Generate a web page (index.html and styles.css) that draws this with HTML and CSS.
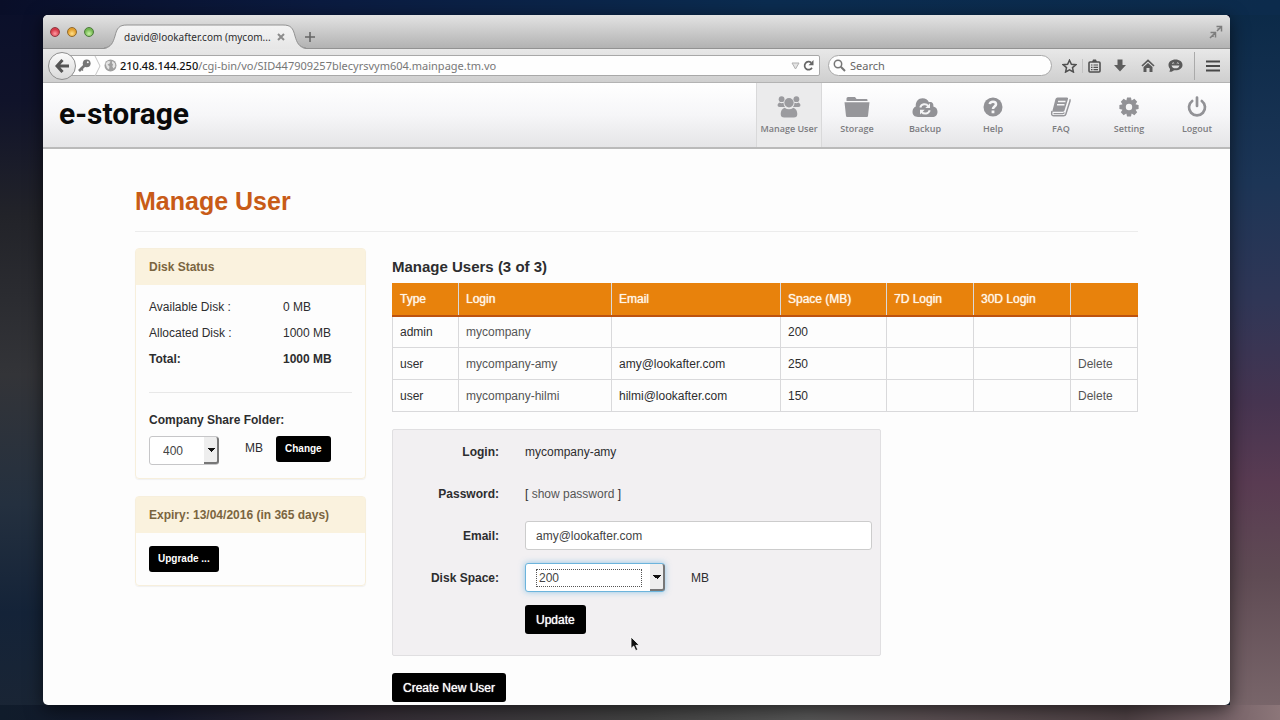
FILE: index.html
```html
<!DOCTYPE html>
<html lang="en">
<head>
<meta charset="utf-8">
<title>Manage User - e-storage</title>
<link rel="stylesheet" href="styles.css">
</head>
<body>
<div class="desktop">
<div class="window">
  <div class="titlebar">
    <div class="lights">
      <button class="light red" aria-label="Close"></button>
      <button class="light amber" aria-label="Minimise"></button>
      <button class="light green" aria-label="Zoom"></button>
    </div>
    <div class="tab">
      <svg class="tab-shape" viewBox="0 0 202 25" preserveAspectRatio="none" aria-hidden="true">
        <defs><linearGradient id="tabfill" x1="0" y1="0" x2="0" y2="1"><stop offset="0" stop-color="#f4f4f4"/><stop offset="1" stop-color="#e6e6e6"/></linearGradient></defs>
        <path d="M0 25 C7 24 9 19 11 12 C13 4 15 1 23 1 H179 C187 1 189 4 191 12 C193 19 195 24 202 25Z" fill="url(#tabfill)"/>
        <path d="M0 24 C7 23 9 19 11 12 C13 4 15 1 23 1 H179 C187 1 189 4 191 12 C193 19 195 23 202 24" fill="none" stroke="#929292"/>
      </svg>
      <span class="tab-title">david@lookafter.com (mycom...</span>
      <button class="tab-close" aria-label="Close tab"><svg width="8" height="8" viewBox="0 0 8 8"><path d="M1 1L7 7M7 1L1 7" stroke="#8c8c8c" stroke-width="2"/></svg></button>
    </div>
    <button class="icon-button new-tab" aria-label="New tab"><svg width="10" height="10" viewBox="0 0 10 10"><path d="M5 0V10M0 5H10" stroke="#666" stroke-width="1.6"/></svg></button>
    <button class="icon-button expand" aria-label="Full screen"><svg width="14" height="14" viewBox="0 0 14 14" fill="none" stroke="#7d7d7d" stroke-width="1.5"><path d="M7.5 1.5H12.500V6.500M12 2L8 6M1.500 7.500H6.500V12.500M6 8L1 13M8.500 4H10M4 10V12"/></svg></button>
  </div>

  <div class="toolbar">
    <button class="back" aria-label="Back"><svg width="15" height="14" viewBox="0 0 15 14"><path d="M7.500 1L2 7L7.500 13M2.500 7H14" fill="none" stroke="#555" stroke-width="3"/></svg></button>
    <div class="location">
      <svg class="key" width="13" height="13" viewBox="0 0 13 13"><circle cx="8.700" cy="4.300" r="3.900" fill="#777"/><circle cx="9.800" cy="3.200" r="1" fill="#f5f5f5"/><path d="M6.500 6.500L1 12" stroke="#777" stroke-width="2.600"/><path d="M2.500 9L5 11.500" stroke="#777" stroke-width="1.500"/></svg>
      <svg width="7" height="20" viewBox="0 0 7 20"><path d="M1 0L6 10L1 20" fill="none" stroke="#c4c4c4"/></svg>
      <svg width="13" height="13" viewBox="0 0 13 13"><circle cx="6.500" cy="6.500" r="6" fill="#a0a0a0"/><path d="M1.500 4.500L4 2L6.500 2.500L5.500 4.500L3.500 5.500L5.500 7.500L5 10.500L3 9ZM8.500 2L11 4.500L11.300 7.500L9.500 9.500L8.300 7.500L9 5.500L7.800 4Z" fill="#e4e4e4"/></svg>
      <div class="address" role="textbox" aria-label="Address"><b>210.48.144.250</b>/cgi-bin/vo/SID447909257blecyrsvym604.mainpage.tm.vo</div>
      <svg width="9" height="8" viewBox="0 0 9 8"><path d="M1 1H8L4.500 7Z" fill="#e4e4e4" stroke="#b0b0b0"/></svg>
      <button class="icon-button" aria-label="Reload"><svg width="11" height="11" viewBox="0 0 11 11"><path d="M9 7.800A4 4 0 1 1 8.200 2.600" fill="none" stroke="#666" stroke-width="1.700"/><path d="M10.500 0V5.200H5.500Z" fill="#666"/></svg></button>
    </div>
    <label class="search">
      <svg width="13" height="13" viewBox="0 0 13 13"><circle cx="5" cy="5" r="3.700" fill="none" stroke="#777" stroke-width="1.500"/><path d="M7.800 7.800L12 12" stroke="#777" stroke-width="2"/></svg>
      <input type="text" placeholder="Search" aria-label="Search">
    </label>
    <div class="tools">
      <button class="icon-button" aria-label="Bookmark"><svg width="15" height="14" viewBox="0 0 15 14"><path d="M7.500 1.200L9.400 5.200L13.800 5.700L10.500 8.600L11.400 13L7.500 10.800L3.600 13L4.500 8.600L1.200 5.700L5.600 5.200Z" fill="none" stroke="#505050" stroke-width="1.500"/></svg></button>
      <button class="icon-button divided" aria-label="Bookmarks list"><svg width="13" height="14" viewBox="0 0 13 14"><rect x="1" y="3" width="11" height="10" rx="1" fill="none" stroke="#505050" stroke-width="1.600"/><path d="M4 3L5 0.500H8L9 3Z" fill="#505050"/><path d="M3 6H4.500M5.500 6H10M3 8.300H4.500M5.500 8.300H10M3 10.600H4.500M5.500 10.600H10" stroke="#505050" stroke-width="1.200"/></svg></button>
      <button class="icon-button" aria-label="Downloads"><svg width="12" height="13" viewBox="0 0 12 13"><path d="M3.500 0.500H8.500V6H12L6 12.500L0 6H3.500Z" fill="#5e5e5e"/></svg></button>
      <button class="icon-button" aria-label="Home"><svg width="14" height="13" viewBox="0 0 14 13"><path d="M1 7L7 1.300L13 7" fill="none" stroke="#5a5a5a" stroke-width="1.700"/><path d="M2.500 8L7 4L11.500 8V13H8.500V9H5.500V13H2.500Z" fill="#5a5a5a"/></svg></button>
      <button class="icon-button" aria-label="Chat"><svg width="15" height="13" viewBox="0 0 15 13"><path d="M7.500 0.500C11.500 0.500 14.500 2.800 14.500 6C14.500 9.200 11.500 11.300 7.500 11.300C6.500 11.300 5.500 11.200 4.500 12.200C3.500 12.800 2.200 12.800 1 12.600C2 11.800 2.200 10.800 2 9.800C1 8.800 0.500 7.500 0.500 6C0.500 2.800 3.500 0.500 7.500 0.500Z" fill="#5a5a5a"/><path d="M3.500 6.500H11.500C11 8.500 9.500 9.300 7.500 9.300S4 8.500 3.500 6.500Z" fill="#ddd"/><path d="M4.200 4.500Q5.200 3 6.200 4.500M8.800 4.500Q9.800 3 10.800 4.500" fill="none" stroke="#ddd"/></svg></button>
    </div>
    <button class="icon-button menu" aria-label="Menu"><svg width="14" height="12" viewBox="0 0 14 12"><path d="M0 1.500H14M0 6H14M0 10.500H14" stroke="#484848" stroke-width="2"/></svg></button>
  </div>

  <header class="site-header">
    <a class="logo" href="#">e-storage</a>
    <nav class="main-nav" aria-label="Main">
      <a class="nav-item active" href="#">
        <svg width="24" height="24" viewBox="0 0 24 24" fill="#9b9b9f"><circle cx="4.600" cy="4.200" r="2.900"/><circle cx="19.400" cy="4.200" r="2.900"/><path d="M2.500 7.500Q4 8.800 6.500 7.800Q6.500 10.500 8 12H2.500Q0.500 12 0.500 10Q0.500 8.500 2.500 7.500ZM21.500 7.500Q20 8.800 17.500 7.800Q17.500 10.500 16 12H21.500Q23.500 12 23.500 10Q23.500 8.500 21.500 7.500Z"/><circle cx="12" cy="7.800" r="4.700"/><path d="M7.600 12.700Q12 16 16.400 12.700C19 13.500 20.300 16 20.300 19Q20.300 22.600 16.800 22.600H7.200Q3.700 22.600 3.700 19C3.700 16 5 13.500 7.600 12.700Z"/></svg>
        <span>Manage User</span></a>
      <a class="nav-item" href="#">
        <svg width="26" height="24" viewBox="0 0 26 24" fill="#96969a"><path d="M2.500 6V3.500Q2.500 2 4 2H11L12.500 4H22.500Q23.500 4 23.500 5V6Z"/><path d="M0.500 7.200H25.500L24 21Q23.900 22 22.800 22H3.200Q2.100 22 2 21Z"/></svg>
        <span>Storage</span></a>
      <a class="nav-item" href="#">
        <svg width="26" height="24" viewBox="0 0 26 24"><path d="M6 22C2.500 22 0.500 20 0.500 16.800C0.500 14.500 1.800 12.500 3.800 11.600C3.300 6.500 6.500 3.200 10.500 3.200C13.500 3.200 15.800 4.800 16.900 7.200C19.700 6.300 22 8.500 21.300 11.400C24 12 25.500 14 25.500 16.700C25.500 20 23.300 22 20.500 22Z" fill="#929296"/><path d="M8.300 12.500C9.200 8.800 14 8 16.200 11M17.700 15.300C16.800 18.800 12 19.800 9.600 16.800" fill="none" stroke="#f3f3f4" stroke-width="2"/><path d="M18 8.300V13H13.300ZM8 19.500V14.800H12.700Z" fill="#f3f3f4"/></svg>
        <span>Backup</span></a>
      <a class="nav-item" href="#">
        <svg width="20" height="24" viewBox="0 0 20 24"><circle cx="10" cy="12" r="9.500" fill="#929296"/><path d="M6.800 9.200C7.200 5.800 13 5.900 13 9.200C13 11.500 10 11.500 10 14" fill="none" stroke="#f6f6f7" stroke-width="2.600"/><path d="M8.600 15.600H11.400V18.200H8.600Z" fill="#f6f6f7"/></svg>
        <span>Help</span></a>
      <a class="nav-item" href="#">
        <svg width="22" height="24" viewBox="0 0 22 24"><path d="M7.500 2.500H17Q18.500 2.500 18 4L14.500 15.500Q14.100 16.800 12.800 16.800H2.200L5.500 4Q6 2.500 7.500 2.500Z" fill="#96969a"/><path d="M2 16Q0.800 20.800 3.500 20.800H13.500Q15.300 20.800 15.800 19.300L20 6Q20.300 5 19.600 4.400" fill="none" stroke="#96969a" stroke-width="1.500"/><path d="M3.500 18.600H12.800Q14 18.600 14.400 17.500" fill="none" stroke="#96969a" stroke-width="1.200"/><path d="M8 6.500H15.500M7 9.700H14.500" stroke="#f6f6f7" stroke-width="1.500"/></svg>
        <span>FAQ</span></a>
      <a class="nav-item" href="#">
        <svg width="20" height="24" viewBox="-10 -12 20 24"><g fill="#929296"><circle r="7"/><path id="teeth" d="M-2 -9.600H2L2.700 -6H-2.700ZM-2 9.600H2L2.700 6H-2.700ZM-9.600 -2V2L-6 2.700V-2.700ZM9.600 -2V2L6 2.700V-2.700Z"/><use href="#teeth" transform="rotate(45)"/></g><circle r="3.200" fill="#f6f6f7"/></svg>
        <span>Setting</span></a>
      <a class="nav-item" href="#">
        <svg width="20" height="24" viewBox="0 0 20 24" fill="none" stroke="#929296" stroke-width="2.700" stroke-linecap="round"><path d="M5.200 6A8 8 0 1 0 14.800 6M10 2.500V11"/></svg>
        <span>Logout</span></a>
    </nav>
  </header>

  <main class="page">
    <h1 class="page-title">Manage User</h1>
    <div class="columns">
      <aside class="sidebar">
        <section class="panel">
          <h2 class="panel-heading">Disk Status</h2>
          <div class="panel-body">
            <dl class="stats">
              <dt>Available Disk :</dt><dd>0 MB</dd>
              <dt>Allocated Disk :</dt><dd>1000 MB</dd>
              <dt class="total">Total:</dt><dd class="total">1000 MB</dd>
            </dl>
            <form class="share">
              <label class="share-label" for="share">Company Share Folder:</label>
              <div class="share-row">
                <span class="select small"><select id="share"><option>400</option></select></span>
                <span class="unit">MB</span>
                <button class="btn btn-small" type="button">Change</button>
              </div>
            </form>
          </div>
        </section>
        <section class="panel">
          <h2 class="panel-heading">Expiry: 13/04/2016 (in 365 days)</h2>
          <div class="panel-body upgrade"><button class="btn btn-small" type="button">Upgrade ...</button></div>
        </section>
      </aside>

      <section class="content">
        <h2 class="list-title">Manage Users (3 of 3)</h2>
        <table class="users">
          <colgroup><col class="c-type"><col class="c-login"><col class="c-email"><col class="c-space"><col class="c-week"><col class="c-month"><col class="c-action"></colgroup>
          <thead><tr><th>Type</th><th>Login</th><th>Email</th><th>Space (MB)</th><th>7D Login</th><th>30D Login</th><th></th></tr></thead>
          <tbody>
            <tr><td>admin</td><td><a href="#">mycompany</a></td><td></td><td>200</td><td></td><td></td><td></td></tr>
            <tr><td>user</td><td><a href="#">mycompany-amy</a></td><td>amy@lookafter.com</td><td>250</td><td></td><td></td><td><a href="#">Delete</a></td></tr>
            <tr><td>user</td><td><a href="#">mycompany-hilmi</a></td><td>hilmi@lookafter.com</td><td>150</td><td></td><td></td><td><a href="#">Delete</a></td></tr>
          </tbody>
        </table>

        <form class="edit">
          <span class="label">Login:</span><span>mycompany-amy</span>
          <span class="label">Password:</span><span>[ <a href="#">show password</a> ]</span>
          <label class="label" for="email">Email:</label><input class="field" id="email" type="text" value="amy@lookafter.com">
          <label class="label" for="space">Disk Space:</label>
          <div class="space-row"><span class="select focused"><select id="space"><option>200</option></select></span><span>MB</span></div>
          <button class="btn update" type="button">Update</button>
          <svg class="pointer" width="11" height="16" viewBox="0 0 11 16" aria-hidden="true"><path d="M1 1V12.500L3.700 10L5.700 14.600L7.800 13.700L5.800 9.300H9.300Z" fill="#111" stroke="#fff" stroke-width="0.800"/></svg>
        </form>
        <button class="btn" type="button">Create New User</button>
      </section>
    </div>
  </main>
</div>
</div>
</body>
</html>
```
FILE: styles.css
```css
* { box-sizing: border-box; }
body {
  margin: 0;
  color: #2d2d2f;
  font: 12px/18px "Liberation Sans", Arial, sans-serif;
}
button, input, select { font: inherit; color: inherit; }
button { border: 0; padding: 0; background: none; }
h1, h2, dl, dd { margin: 0; }
a { color: #555; text-decoration: none; }
svg { display: block; flex: none; }

.desktop {
  display: flex;
  min-height: 100vh;
  padding: 15px 50px 15px 43px;
  background:
    linear-gradient(90deg, #101c2b, #14182c 12%, #352e36 30%, #444 50%, #575757 63%, #5a4f52 72%, #4e4144 88%, #786469 96%, #8c7679) bottom / 100% 15px no-repeat,
    linear-gradient(90deg, #090e28, #0b1b40 25%, #0b2c50 60%, #0c2b4c) top / 100% 15px no-repeat,
    linear-gradient(180deg, #0a2947, #1c3556 25%, #303656 42%, #463450 56%, #593b52 67%, #5f4b54 80%, #7b686c) right / 50px 100% no-repeat,
    linear-gradient(180deg, #0a0f2a, #10132a 14%, #222329 30%, #333438 52%, #24303f 70%, #142338 85%, #1a2534);
}
.window {
  display: flex;
  flex: 1;
  flex-direction: column;
  min-width: 0;
  overflow: hidden;
  border-radius: 5px;
  background: #fdfdfd;
  box-shadow: 0 4px 18px rgba(0, 0, 0, 0.6);
}

/* Browser chrome */
.titlebar {
  display: flex;
  align-items: flex-end;
  height: 34px;
  padding: 0 7px;
  border-bottom: 1px solid #929292;
  background: linear-gradient(#e3e3e3, #b2b2b2);
  font: 10px/16px "Noto Sans", sans-serif;
}
.lights { display: flex; gap: 7px; align-self: center; width: 54px; }
.light { width: 10px; height: 10px; border: 1px solid #7c5a50; border-radius: 50%; }
.red { background: radial-gradient(circle at 50% 70%, #ff9ba2, #d63a4a 60%); border-color: #8f3840; }
.amber { background: radial-gradient(circle at 50% 70%, #ffe08a, #e3a02e 60%); border-color: #91692c; }
.green { background: radial-gradient(circle at 50% 70%, #c8f2a4, #74b852 60%); border-color: #4c7a3c; }
.tab {
  position: relative;
  display: flex;
  align-items: center;
  width: 202px;
  height: 25px;
  margin-bottom: -1px;
  padding: 0 21px 0 20px;
}
.tab-shape { position: absolute; inset: 0; width: 100%; height: 100%; }
.tab-title { position: relative; flex: 1; white-space: nowrap; }
.tab-close { position: relative; }
.icon-button { display: flex; align-items: center; justify-content: center; }
.new-tab { width: 8px; height: 22px; }
.expand { align-self: center; margin-left: auto; }
.toolbar {
  display: flex;
  align-items: center;
  height: 34px;
  border-bottom: 1px solid #b3b3b3;
  padding-left: 5px;
  background: linear-gradient(#e8e8e8, #cfcfcf);
  font: 11px/16px "Noto Sans", sans-serif;
}
.back {
  position: relative;
  display: flex;
  align-items: center;
  justify-content: center;
  width: 28px;
  height: 28px;
  margin-right: -10px;
  border: 1px solid #8e8e8e;
  border-radius: 50%;
  background: linear-gradient(#fbfbfb, #dadada);
}
.location {
  display: flex;
  flex: 1;
  align-items: center;
  gap: 3px;
  min-width: 0;
  height: 21px;
  margin-right: 8px;
  padding: 0 5px 0 11px;
  border: 1px solid #a8a8a8;
  border-radius: 2px;
  background: #fefefe;
}
.address { flex: 1; overflow: hidden; color: #777; white-space: nowrap; }
.address b { color: #111; font-weight: 500; }
.search {
  display: flex;
  align-items: center;
  gap: 4px;
  width: 224px;
  height: 21px;
  padding: 0 10px 0 4px;
  border: 1px solid #a8a8a8;
  border-radius: 11px;
  background: #fefefe;
}
.search input { flex: 1; min-width: 0; padding: 0; border: 0; outline: 0; background: none; }
.search input::placeholder { color: #666; opacity: 1; }
.tools {
  display: grid;
  grid-template-columns: 26px 24px 28px 27px 28px;
  margin: 0 5px 0 4px;
}
.divided { border-left: 1px solid #c2c2c2; }
.menu { width: 36px; height: 28px; border-left: 1px solid #aaa; }

/* Site header */
.site-header {
  display: flex;
  justify-content: space-between;
  height: 66px;
  border-bottom: 2px solid #bababa;
  background: linear-gradient(#fff, #f6f6f8 50%, #e5e5e7);
}
.logo {
  padding-left: 16px;
  color: #0a0a0a;
  font: 700 30px/62px Roboto, sans-serif;
}
.main-nav { display: flex; gap: 2px; }
.nav-item {
  display: flex;
  flex-direction: column;
  align-items: center;
  gap: 3px;
  width: 66px;
  padding-top: 12px;
  color: #7c7c80;
  font: 600 9px/14px "Open Sans", sans-serif;
  white-space: nowrap;
}
.active { background: #ebebec; box-shadow: inset 1px 0 #d9d9da, inset -1px 0 #d9d9da; }

/* Page */
.page { flex: 1; padding: 35px 92px 3px; }
.page-title {
  margin-bottom: 16px;
  padding-bottom: 13px;
  border-bottom: 1px solid #ececec;
  color: #c85b17;
  font-size: 25px;
  font-weight: 700;
  line-height: 34px;
}
.columns { display: grid; grid-template-columns: 231px minmax(0, 1fr); gap: 26px; }
.sidebar { display: flex; flex-direction: column; gap: 17px; }
.panel { border: 1px solid #f7efdc; border-radius: 4px; box-shadow: 0 1px 1px rgba(0, 0, 0, 0.05); }
.panel-heading {
  padding: 9px 13px;
  background: #faf2de;
  color: #7a6540;
  font-size: 12px;
}
.panel-body { padding: 9px 13px 13px; }
.upgrade { padding-top: 13px; }
.stats {
  display: grid;
  grid-template-columns: 134px 1fr;
  line-height: 26px;
}
.total { font-weight: 700; }
.share { margin-top: 20px; padding-top: 18px; border-top: 1px solid #e8e8e8; }
.share-label { display: block; margin-bottom: 7px; font-weight: 700; }
.share-row { display: flex; }
.unit { width: 57px; padding: 3px 0 0 26px; }

.select { position: relative; display: flex; width: 140px; height: 29px; }
.select select {
  appearance: none;
  width: 100%;
  padding: 0 20px 0 13px;
  border: 1px solid #c6c6c8;
  border-radius: 3px;
  outline: 0;
  background: #fff;
  color: #444;
}
.select::after {
  content: "";
  position: absolute;
  inset: 1px 0 1px auto;
  width: 13px;
  border: solid #777;
  border-width: 0 2px 2px 0;
  border-radius: 0 3px 3px 0;
  background: conic-gradient(from -45deg at 50% 100%, #111 90deg, transparent 0) center / 6px 3px no-repeat, #eee;
  pointer-events: none;
}
.small { width: 70px; }
.focused select { border-color: #6cb4dc; box-shadow: 0 0 6px rgba(102, 180, 225, 0.7); }
.focused::before {
  content: "";
  position: absolute;
  inset: 6px 23px 5px 11px;
  border: 1px dotted #555;
  pointer-events: none;
}
/* Arrow points down */
.select::after {
  background: conic-gradient(from 135deg at 50% 100%, transparent 0, transparent 360deg) center / 6px 3px no-repeat, conic-gradient(from -45deg at 50% 100%, #111 90deg, transparent 0) center / 8px 4px no-repeat, #eee;
}
.btn {
  height: 29px;
  padding: 0 11px;
  border-radius: 3px;
  background: #000;
  color: #fff;
  text-shadow: 0 0 1px currentColor;
}
.btn-small { height: 26px; padding: 0 9px; font-size: 10px; font-weight: 700; text-shadow: none; }

.list-title {
  margin: 9px 0 7px;
  font-size: 15px;
  font-weight: 700;
  line-height: 19px;
}
.users { width: 100%; border-collapse: collapse; table-layout: fixed; }
.users th, .users td {
  height: 32px;
  padding: 0 7px;
  border: 1px solid #d9d9db;
  text-align: left;
}
.users th {
  border-top-color: #e8820c;
  border-bottom: 2px solid #bd5310;
  background: #e8820c;
  color: #fff6e8;
  font-weight: 400;
  text-shadow: 0 0 1px currentColor;
}
.users th:first-child { border-left-color: #e8820c; }
.users th:last-child { border-right-color: #e8820c; }
.c-type { width: 66px; }
.c-login { width: 153px; }
.c-email { width: 169px; }
.c-space { width: 106px; }
.c-week { width: 87px; }
.c-month { width: 97px; }

.edit {
  position: relative;
  display: grid;
  grid-template-columns: 98px 1fr;
  grid-auto-rows: 29px;
  gap: 13px 26px;
  align-items: center;
  max-width: 489px;
  margin: 17px 0;
  padding: 7px 8px 21px;
  border: 1px solid #e0dfe1;
  border-radius: 2px;
  background: #f2f0f2;
}
.label { font-weight: 700; text-align: right; }
.field {
  width: 100%;
  height: 29px;
  padding: 0 10px;
  border: 1px solid #ccc;
  border-radius: 3px;
  background: #fff;
  color: #444;
}
.space-row { display: flex; align-items: center; gap: 26px; }
.update { grid-column: 2; justify-self: start; }
.pointer { position: absolute; left: 237px; top: 206px; }
```
